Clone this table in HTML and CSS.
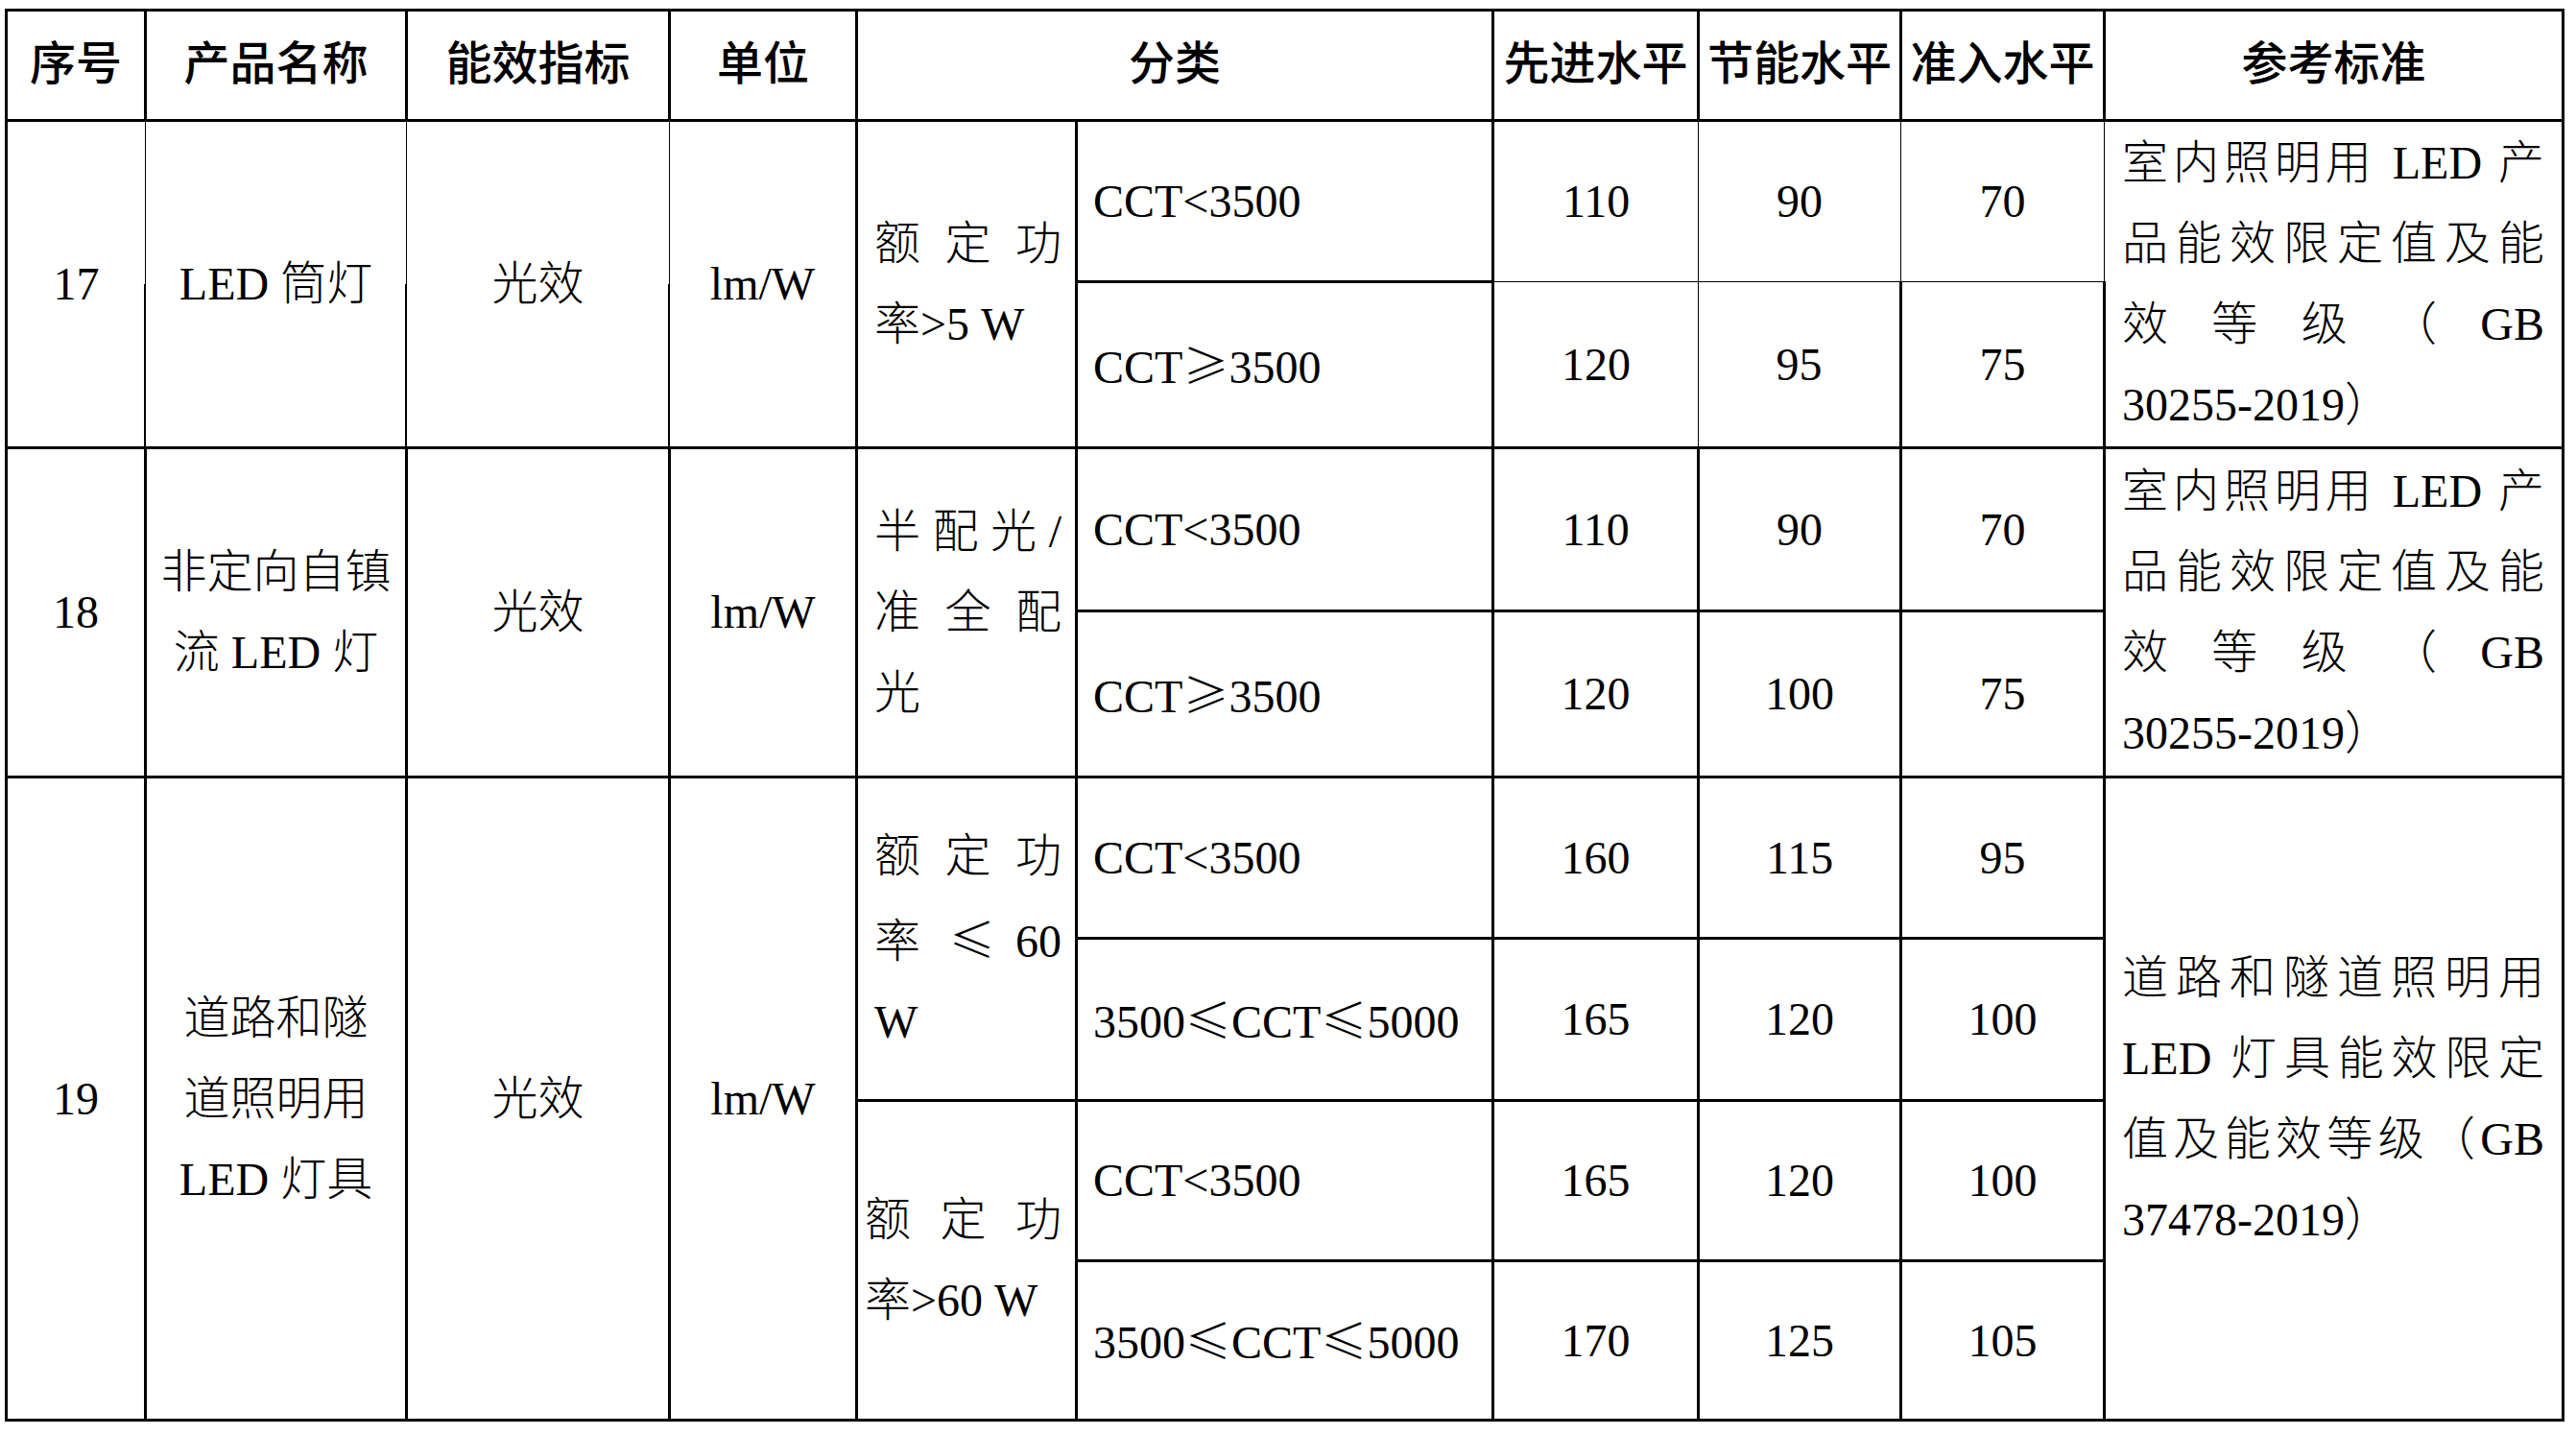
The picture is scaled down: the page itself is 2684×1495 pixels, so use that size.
FILE: index.html
```html
<!DOCTYPE html>
<html lang="zh-CN">
<head>
<meta charset="utf-8">
<title>LED 照明产品能效指标</title>
<link rel="stylesheet" href="styles.css">
</head>
<body>
<table class="grid">
  <colgroup>
    <col class="c-no"><col class="c-name"><col class="c-ind"><col class="c-unit"><col class="c-cat"><col class="c-cct"><col class="c-v1"><col class="c-v2"><col class="c-v3"><col class="c-ref">
  </colgroup>
  <thead>
    <tr class="head">
      <th>序号</th><th>产品名称</th><th>能效指标</th><th>单位</th><th colspan="2">分类</th><th>先进水平</th><th>节能水平</th><th>准入水平</th><th>参考标准</th>
    </tr>
  </thead>
  <tbody>
    <tr class="h168">
      <td rowspan="2" class="split first">17</td>
      <td rowspan="2" class="split">LED 筒灯</td>
      <td rowspan="2" class="split">光效</td>
      <td rowspan="2" class="split-l">lm/W</td>
      <td rowspan="2" class="cat"><span class="ln">额定功</span><span class="ln last">率&gt;5 W</span></td>
      <td class="cct">CCT&lt;3500</td>
      <td class="thin-b thin-r">110</td>
      <td class="thin-b thin-l thin-r">90</td>
      <td class="thin-b thin-l thin-r">70</td>
      <td rowspan="2" class="ref thin-l"><span class="ln">室内照明用 LED 产</span><span class="ln">品能效限定值及能</span><span class="ln">效等级（GB</span><span class="ln last">30255-2019）</span></td>
    </tr>
    <tr class="h173">
      <td class="cct">CCT<span class="sym">≥</span>3500</td>
      <td class="thin-t thin-r">120</td>
      <td class="thin-t thin-l">95</td>
      <td class="thin-t">75</td>
    </tr>
    <tr class="h170">
      <td rowspan="2">18</td>
      <td rowspan="2"><span class="ln">非定向自镇</span><span class="ln">流 LED 灯</span></td>
      <td rowspan="2">光效</td>
      <td rowspan="2">lm/W</td>
      <td rowspan="2" class="cat"><span class="ln">半配光/</span><span class="ln">准全配</span><span class="ln last">光</span></td>
      <td class="cct">CCT&lt;3500</td>
      <td>110</td>
      <td>90</td>
      <td>70</td>
      <td rowspan="2" class="ref"><span class="ln">室内照明用 LED 产</span><span class="ln">品能效限定值及能</span><span class="ln">效等级（GB</span><span class="ln last">30255-2019）</span></td>
    </tr>
    <tr class="h173">
      <td class="cct">CCT<span class="sym">≥</span>3500</td>
      <td>120</td>
      <td>100</td>
      <td>75</td>
    </tr>
    <tr class="h168">
      <td rowspan="4">19</td>
      <td rowspan="4"><span class="ln">道路和隧</span><span class="ln">道照明用</span><span class="ln">LED 灯具</span></td>
      <td rowspan="4">光效</td>
      <td rowspan="4">lm/W</td>
      <td rowspan="2" class="cat"><span class="ln">额定功</span><span class="ln">率 <span class="sym">≤</span> 60</span><span class="ln last">W</span></td>
      <td class="cct">CCT&lt;3500</td>
      <td>160</td>
      <td>115</td>
      <td>95</td>
      <td rowspan="4" class="ref"><span class="ln">道路和隧道照明用</span><span class="ln">LED 灯具能效限定</span><span class="ln">值及能效等级（GB</span><span class="ln last">37478-2019）</span></td>
    </tr>
    <tr class="h169">
      <td class="cct">3500<span class="sym">≤</span>CCT<span class="sym">≤</span>5000</td>
      <td>165</td>
      <td>120</td>
      <td>100</td>
    </tr>
    <tr class="h167">
      <td rowspan="2" class="cat cat-tight"><span class="ln">额定功</span><span class="ln last">率&gt;60 W</span></td>
      <td class="cct">CCT&lt;3500</td>
      <td>165</td>
      <td>120</td>
      <td>100</td>
    </tr>
    <tr class="h166">
      <td class="cct">3500<span class="sym">≤</span>CCT<span class="sym">≤</span>5000</td>
      <td>170</td>
      <td>125</td>
      <td>105</td>
    </tr>
  </tbody>
</table>
</body>
</html>
```
FILE: styles.css
```css
html, body {
  margin: 0;
  padding: 0;
  background: #ffffff;
}

.grid {
  border-collapse: collapse;
  table-layout: fixed;
  width: 2664px;
  margin: 9px 0 0 5px;
  font-family: "Liberation Serif", "Noto Sans CJK SC", serif;
  font-weight: 300;
  font-size: 48px;
  color: #000;
}

.c-no { width: 145px; }
.c-name { width: 272px; }
.c-ind { width: 274px; }
.c-unit { width: 195px; }
.c-cat { width: 229px; }
.c-cct { width: 434px; }
.c-v1 { width: 214px; }
.c-v2 { width: 211px; }
.c-v3 { width: 212px; }
.c-ref { width: 478px; }

.grid th,
.grid td {
  border: 3px solid #000;
  padding: 0;
  text-align: center;
  vertical-align: middle;
  line-height: 84px;
}

.grid th {
  font-family: "Noto Sans CJK SC", sans-serif;
  font-weight: 500;
  font-size: 48px;
  white-space: nowrap;
  padding-bottom: 12px;
}

.head { height: 115px; }
.h166 { height: 166px; }
.h167 { height: 167px; }
.h168 { height: 168px; }
.h169 { height: 169px; }
.h170 { height: 170px; }
.h173 { height: 173px; }

.ln {
  display: block;
}

.grid td.cat,
.grid td.ref {
  text-align: justify;
  text-align-last: justify;
}

.grid td.cat .ln,
.grid td.ref .ln {
  text-align: justify;
  text-align-last: justify;
}

.grid td.cat .ln.last,
.grid td.ref .ln.last {
  text-align-last: left;
}

.grid td.cat {
  padding: 0 14px 0 17px;
}

.grid td.cat-tight {
  padding-left: 7px;
}

.grid td.ref {
  padding: 0 18px 0 17px;
}

.grid td.cct {
  text-align: left;
  padding-left: 16px;
  white-space: nowrap;
}

.sym {
  font-family: "Noto Sans CJK SC", sans-serif;
  font-weight: 300;
}

/* Row 17: the PDF draws the upper half of these rules thin, the lower half thick */
.grid td.split {
  border-right-width: 1px;
  border-left-width: 1px;
  background: linear-gradient(#000, #000) right -1px bottom / 2px 50% no-repeat;
}

.grid td.split.first {
  border-left-width: 3px;
}

.grid td.split-l {
  border-left-width: 1px;
}

.grid td.thin-b { border-bottom-width: 1px; }
.grid td.thin-t { border-top-width: 1px; }
.grid td.thin-l { border-left-width: 1px; }
.grid td.thin-r { border-right-width: 1px; }
```
